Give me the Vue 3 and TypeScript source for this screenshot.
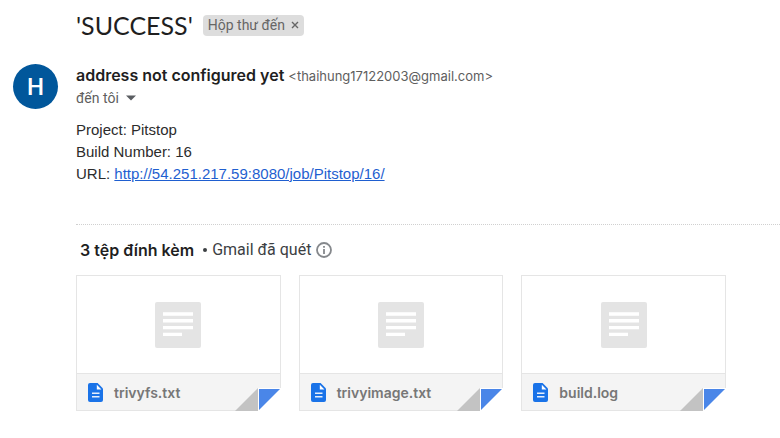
<script setup lang="ts">
interface Attachment {
  name: string
  href: string
}

const sender = {
  initial: 'H',
  name: 'address not configured yet',
  email: '<thaihung17122003@gmail.com>',
}

const buildUrl = 'http://54.251.217.59:8080/job/Pitstop/16/'

const attachments: Attachment[] = [
  { name: 'trivyfs.txt', href: '#trivyfs' },
  { name: 'trivyimage.txt', href: '#trivyimage' },
  { name: 'build.log', href: '#build-log' },
]
</script>

<template>
  <main class="mail">
    <header class="subject">
      <h1>'SUCCESS'</h1>
      <span class="label">
        Hộp thư đến
        <button type="button" class="remove">
          <svg width="8" height="8" viewBox="0 0 8 8">
            <path d="M1 1l6 6M7 1L1 7" stroke="#666" stroke-width="1.4" />
          </svg>
        </button>
      </span>
    </header>

    <section class="sender">
      <div class="avatar">{{ sender.initial }}</div>
      <div class="who">
        <div class="from">
          <strong>{{ sender.name }}</strong>
          <span class="email">{{ sender.email }}</span>
        </div>
        <button type="button" class="to">
          đến tôi
          <svg width="10" height="6" viewBox="0 0 10 6"><path d="M0 .5h10L5 5.5z" fill="#5a5d61" /></svg>
        </button>
      </div>
    </section>

    <section class="content">
      <div>Project: Pitstop</div>
      <div>Build Number: 16</div>
      <div>URL: <a :href="buildUrl">{{ buildUrl }}</a></div>
    </section>

    <section class="attachments">
      <div class="summary">
        <h2>3 tệp đính kèm</h2>
        <span class="dot"></span>
        <span>Gmail đã quét</span>
        <svg class="info" width="16" height="16" viewBox="0 0 16 16">
          <circle cx="8" cy="8" r="7" fill="none" stroke="#85888c" stroke-width="1.8" />
          <path d="M8 7v5M8 4v1.8" stroke="#85888c" stroke-width="1.8" />
        </svg>
      </div>
      <div class="cards">
        <a v-for="file in attachments" :key="file.name" class="card" :href="file.href">
          <span class="preview">
            <svg width="46" height="46" viewBox="0 0 46 46">
              <rect width="46" height="46" rx="2" fill="#e4e4e4" />
              <path d="M8 12h30M8 18.8h30M8 25.6h30M8 32.4h19" stroke="#fff" stroke-width="3.4" />
            </svg>
          </span>
          <span class="caption">
            <svg width="15" height="19" viewBox="0 0 15 19">
              <path d="M2 0h7.6L15 5.4V17a2 2 0 0 1-2 2H2a2 2 0 0 1-2-2V2a2 2 0 0 1 2-2z" fill="#1a73e8" />
              <path d="M8.8 1.8v4.6h4.6z" fill="#fff" />
              <path d="M4 10.3h7.5M4 13.8h7.5" stroke="#e6effc" stroke-width="1.6" />
            </svg>
            {{ file.name }}
          </span>
          <svg class="fold" width="46" height="23" viewBox="0 0 46 23">
            <path d="M23 0h23v23H23z" fill="#fff" />
            <path d="M0 23L23 0v23z" fill="#c3c3c3" />
            <path d="M24 1h21L24 22z" fill="#4a86e8" />
          </svg>
        </a>
      </div>
    </section>
  </main>
</template>

<style>
body {
  margin: 0;
  background: #fff;
}
</style>

<style scoped>
.mail {
  padding: 9px 0 0 76px;
  font-family: Roboto, "Open Sans", sans-serif;
  color: #1f1f1f;
}

button {
  border: 0;
  padding: 0;
  background: none;
  font: inherit;
  color: inherit;
}

.subject {
  display: flex;
  align-items: center;
  gap: 10px;
  height: 32px;
}

h1 {
  margin: 0;
  font-family: Lato, sans-serif;
  font-size: 25px;
  font-weight: 400;
  line-height: 32px;
}

.label {
  display: flex;
  align-items: center;
  gap: 6px;
  height: 21px;
  padding: 0 5px;
  border-radius: 4px;
  background: #ddd;
  color: #666;
  font-size: 14px;
}

.remove {
  display: flex;
}

.sender {
  display: flex;
  align-items: center;
  gap: 18px;
  margin: 23px 0 0 -63px;
}

.avatar {
  display: flex;
  align-items: center;
  justify-content: center;
  width: 45px;
  height: 45px;
  border-radius: 50%;
  background: #01579b;
  color: #fff;
  font-size: 24px;
  font-weight: 500;
}

.from {
  display: flex;
  align-items: baseline;
  gap: 4px;
  font-family: Inter, sans-serif;
  line-height: 22px;
}

.from strong {
  font-size: 16px;
  font-weight: 600;
}

.email {
  color: #5e5e5e;
  font-size: 13px;
}

.to {
  display: flex;
  align-items: center;
  gap: 7px;
  color: #5e5e5e;
  font-size: 14px;
  line-height: 22px;
}

.content {
  margin-top: 10px;
  font-family: "Liberation Sans", Arial, sans-serif;
  font-size: 15px;
  line-height: 22px;
  color: #2c2c2c;
}

.content a {
  color: #1f5fd0;
}

.attachments {
  margin-top: 39px;
  border-top: 1px dotted #d0d0d0;
}

.summary {
  display: flex;
  align-items: center;
  gap: 5px;
  padding: 14px 4px;
  font-size: 16px;
  line-height: 22px;
  color: #3c4043;
}

h2 {
  margin: 0 4px 0 0;
  font-family: Inter, sans-serif;
  font-size: 16px;
  font-weight: 600;
  color: #1f1f1f;
}

.dot {
  width: 4px;
  height: 4px;
  border-radius: 50%;
  background: #3c4043;
}

.cards {
  display: grid;
  grid-template-columns: repeat(3, 1fr);
  gap: 18px;
  padding-right: 54px;
}

.card {
  position: relative;
  display: flex;
  flex-direction: column;
  border: 1px solid #e5e5e5;
  color: #777;
  font-family: Inter, sans-serif;
  font-size: 14px;
  font-weight: 600;
  text-decoration: none;
}

.preview {
  display: flex;
  align-items: center;
  justify-content: center;
  height: 97px;
}

.caption {
  display: flex;
  align-items: center;
  gap: 11px;
  height: 36px;
  padding-left: 11px;
  border-top: 1px solid #e5e5e5;
  background: #f4f4f4;
}

.fold {
  position: absolute;
  right: -1px;
  bottom: -1px;
}
</style>
